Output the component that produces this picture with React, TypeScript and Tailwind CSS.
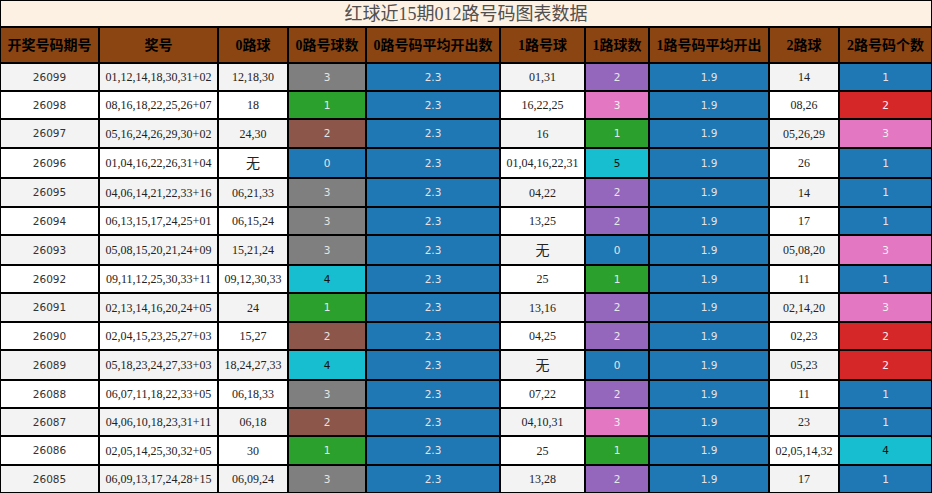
import React from "react";

type C = "gray" | "blue" | "green" | "brown" | "purple" | "pink" | "red" | "cyan";

const colorCls: Record<C, string> = {
  gray: "bg-[#7f7f7f] text-[#e4e4e4]",
  blue: "bg-[#1f77b4] text-[#e4e4e4]",
  green: "bg-[#2ca02c] text-[#e8e8e8]",
  brown: "bg-[#8c564b] text-[#e4e4e4]",
  purple: "bg-[#9467bd] text-[#e8e8e8]",
  pink: "bg-[#e377c2] text-[#f0f0f0]",
  red: "bg-[#d62728] text-[#eeeeee]",
  cyan: "bg-[#17becf] text-[#111111]",
};

type Row = {
  h: string;
  id: string;
  nums: string;
  r0: string;
  c0: [string, C];
  r1: string;
  c1: [string, C];
  r2: string;
  c2: [string, C];
};

const rows: Row[] = [
  { h: "h-[28px]", id: "26099", nums: "01,12,14,18,30,31+02", r0: "12,18,30", c0: ["3", "gray"], r1: "01,31", c1: ["2", "purple"], r2: "14", c2: ["1", "blue"] },
  { h: "h-[28px]", id: "26098", nums: "08,16,18,22,25,26+07", r0: "18", c0: ["1", "green"], r1: "16,22,25", c1: ["3", "pink"], r2: "08,26", c2: ["2", "red"] },
  { h: "h-[29px]", id: "26097", nums: "05,16,24,26,29,30+02", r0: "24,30", c0: ["2", "brown"], r1: "16", c1: ["1", "green"], r2: "05,26,29", c2: ["3", "pink"] },
  { h: "h-[30px]", id: "26096", nums: "01,04,16,22,26,31+04", r0: "无", c0: ["0", "blue"], r1: "01,04,16,22,31", c1: ["5", "cyan"], r2: "26", c2: ["1", "blue"] },
  { h: "h-[29px]", id: "26095", nums: "04,06,14,21,22,33+16", r0: "06,21,33", c0: ["3", "gray"], r1: "04,22", c1: ["2", "purple"], r2: "14", c2: ["1", "blue"] },
  { h: "h-[28px]", id: "26094", nums: "06,13,15,17,24,25+01", r0: "06,15,24", c0: ["3", "gray"], r1: "13,25", c1: ["2", "purple"], r2: "17", c2: ["1", "blue"] },
  { h: "h-[30px]", id: "26093", nums: "05,08,15,20,21,24+09", r0: "15,21,24", c0: ["3", "gray"], r1: "无", c1: ["0", "blue"], r2: "05,08,20", c2: ["3", "pink"] },
  { h: "h-[28px]", id: "26092", nums: "09,11,12,25,30,33+11", r0: "09,12,30,33", c0: ["4", "cyan"], r1: "25", c1: ["1", "green"], r2: "11", c2: ["1", "blue"] },
  { h: "h-[29px]", id: "26091", nums: "02,13,14,16,20,24+05", r0: "24", c0: ["1", "green"], r1: "13,16", c1: ["2", "purple"], r2: "02,14,20", c2: ["3", "pink"] },
  { h: "h-[28px]", id: "26090", nums: "02,04,15,23,25,27+03", r0: "15,27", c0: ["2", "brown"], r1: "04,25", c1: ["2", "purple"], r2: "02,23", c2: ["2", "red"] },
  { h: "h-[30px]", id: "26089", nums: "05,18,23,24,27,33+03", r0: "18,24,27,33", c0: ["4", "cyan"], r1: "无", c1: ["0", "blue"], r2: "05,23", c2: ["2", "red"] },
  { h: "h-[28px]", id: "26088", nums: "06,07,11,18,22,33+05", r0: "06,18,33", c0: ["3", "gray"], r1: "07,22", c1: ["2", "purple"], r2: "11", c2: ["1", "blue"] },
  { h: "h-[28px]", id: "26087", nums: "04,06,10,18,23,31+11", r0: "06,18", c0: ["2", "brown"], r1: "04,10,31", c1: ["3", "pink"], r2: "23", c2: ["1", "blue"] },
  { h: "h-[29px]", id: "26086", nums: "02,05,14,25,30,32+05", r0: "30", c0: ["1", "green"], r1: "25", c1: ["1", "green"], r2: "02,05,14,32", c2: ["4", "cyan"] },
  { h: "h-[28px]", id: "26085", nums: "06,09,13,17,24,28+15", r0: "06,09,24", c0: ["3", "gray"], r1: "13,28", c1: ["2", "purple"], r2: "17", c2: ["1", "blue"] },
];

const headers = [
  "开奖号码期号",
  "奖号",
  "0路球",
  "0路号球数",
  "0路号码平均开出数",
  "1路号球",
  "1路球数",
  "1路号码平均开出",
  "2路球",
  "2路号码个数",
];

const serif = "font-['Liberation_Serif','Noto_Sans_CJK_SC',serif]";
const sans = "font-['DejaVu_Sans','Noto_Sans_CJK_SC',sans-serif]";

const td = "border border-black p-0 text-center align-middle whitespace-nowrap";

function Plain({ v }: { v: string }) {
  return (
    <td className={`${td} ${serif} ${v === "无" ? "text-[14px]" : "text-[12px]"} text-[#222]`}>{v}</td>
  );
}

function Colored({ v, c }: { v: string; c: C }) {
  return <td className={`${td} ${sans} text-[10.5px] pt-px ${colorCls[c]}`}>{v}</td>;
}

export default function App() {
  return (
    <div className="w-[932px] h-[493px] overflow-hidden bg-white">
      <div
        className={`h-[27px] border border-black bg-[#fdf1e4] flex items-center justify-center text-[18px] leading-none text-[#505050] ${serif}`}
      >
        红球近15期012路号码图表数据
      </div>
      <table className="table-fixed border-separate border-spacing-0 w-[932px]">
        <colgroup>
          <col className="w-[99px]" />
          <col className="w-[119px]" />
          <col className="w-[70px]" />
          <col className="w-[78px]" />
          <col className="w-[134px]" />
          <col className="w-[85px]" />
          <col className="w-[64px]" />
          <col className="w-[120px]" />
          <col className="w-[70px]" />
          <col className="w-[93px]" />
        </colgroup>
        <thead>
          <tr className="h-[36px]">
            {headers.map((h) => (
              <th
                key={h}
                className={`${td} h-[36px] bg-[#8b4513] text-black font-bold text-[14px] ${serif}`}
              >
                {h}
              </th>
            ))}
          </tr>
        </thead>
        <tbody>
          {rows.map((r, i) => (
            <tr key={r.id} className={`${r.h} ${i % 2 === 0 ? "bg-[#f3f3f3]" : "bg-white"}`}>
              <td className={`${td} ${sans} text-[10.5px] pt-px text-[#333]`}>{r.id}</td>
              <Plain v={r.nums} />
              <Plain v={r.r0} />
              <Colored v={r.c0[0]} c={r.c0[1]} />
              <Colored v="2.3" c="blue" />
              <Plain v={r.r1} />
              <Colored v={r.c1[0]} c={r.c1[1]} />
              <Colored v="1.9" c="blue" />
              <Plain v={r.r2} />
              <Colored v={r.c2[0]} c={r.c2[1]} />
            </tr>
          ))}
        </tbody>
      </table>
    </div>
  );
}
